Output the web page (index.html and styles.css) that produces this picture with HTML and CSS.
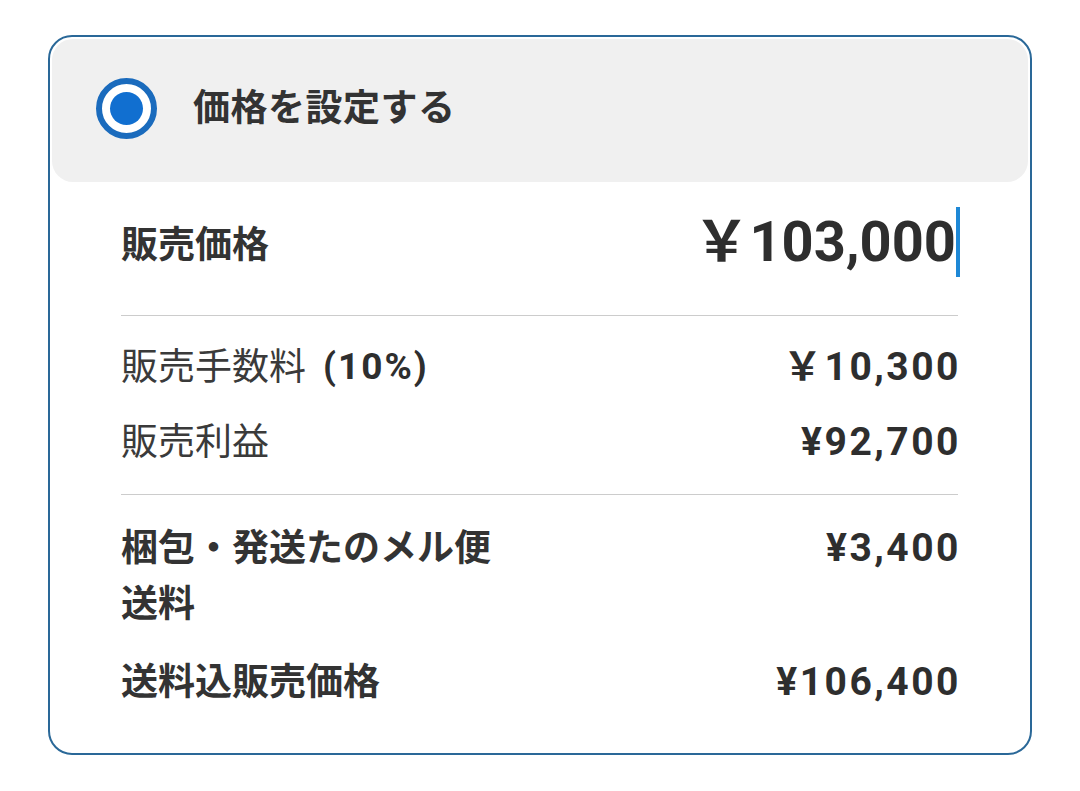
FILE: index.html
```html
<!DOCTYPE html>
<html lang="ja">
<head>
<meta charset="utf-8">
<link rel="stylesheet" href="styles.css">
</head>
<body>
<div class="card">
  <div class="header">
    <span class="radio"><span class="dot"></span></span>
    <span class="title">価格を設定する</span>
  </div>
  <div class="body">
    <div class="row main">
      <span class="label bold">販売価格</span>
      <span class="price-input"><span class="big">￥103,000</span><span class="cursor"></span></span>
    </div>
    <div class="divider"></div>
    <div class="group">
      <div class="row">
        <span class="label">販売手数料<b class="num">(10%)</b></span>
        <span class="amount">￥10,300</span>
      </div>
      <div class="row">
        <span class="label">販売利益</span>
        <span class="amount">¥92,700</span>
      </div>
    </div>
    <div class="divider"></div>
    <div class="group last">
      <div class="row">
        <span class="label bold narrow">梱包・発送たのメル便送料</span>
        <span class="amount">¥3,400</span>
      </div>
      <div class="row">
        <span class="label bold">送料込販売価格</span>
        <span class="amount">¥106,400</span>
      </div>
    </div>
  </div>
</div>
</body>
</html>
```

FILE: styles.css
```css
* { box-sizing: border-box; }
html, body { margin: 0; padding: 0; background: #ffffff; }
body {
  font-family: "Noto Sans CJK JP", "Noto Sans", sans-serif;
  color: #333333;
}
.card {
  margin: 35px 0 0 48px;
  width: 984px;
  height: 720px;
  border: 2px solid #2a6898;
  border-radius: 24px;
  padding: 2px;
}
.header {
  height: 143px;
  background: #f0f0f0;
  border-radius: 21px;
  display: flex;
  align-items: center;
  padding-left: 44px;
  padding-bottom: 5px;
}
.radio {
  width: 61px;
  height: 61px;
  border: 6px solid #1a6bbd;
  border-radius: 50%;
  display: flex;
  align-items: center;
  justify-content: center;
  background: #ffffff;
}
.dot {
  width: 33px;
  height: 33px;
  border-radius: 50%;
  background: #116fd0;
}
.title {
  margin-left: 36px;
  font-size: 37px;
  line-height: 1;
  margin-bottom: 5px;
  font-weight: 700;
  letter-spacing: 0.5px;
  color: #333333;
}
.body {
  padding: 0 70px 0 69px;
}
.row {
  display: flex;
  justify-content: space-between;
  align-items: flex-start;
  line-height: 56px;
}
.row.main {
  align-items: center;
  padding-top: 25px;
  padding-bottom: 38px;
}
.label {
  display: block;
  font-size: 37px;
  line-height: 56px;
  font-weight: 400;
  color: #3a3a3a;
  position: relative;
  top: -3px;
}
.row.main .label { top: 0; }
.label.bold { font-weight: 700; color: #333333; }
.label.narrow { width: 392px; }
.num {
  font-family: Roboto, sans-serif;
  font-weight: 700;
  font-size: 37px;
  line-height: 1;
  vertical-align: 1px;
  letter-spacing: 2px;
  margin-left: 17px;
  color: #2e2e2e;
}
.amount {
  display: block;
  font-family: Roboto, "Noto Sans CJK JP", sans-serif;
  font-weight: 700;
  font-size: 39px;
  line-height: 56px;
  letter-spacing: 2.5px;
  color: #2e2e2e;
  margin-right: -3px;
}
.price-input {
  display: flex;
  align-items: center;
  height: 70px;
  margin-right: -2px;
}
.big {
  font-family: Roboto, "Noto Sans CJK JP", sans-serif;
  font-weight: 700;
  font-size: 56px;
  letter-spacing: 0;
  color: #2e2e2e;
}
.cursor {
  width: 4px;
  height: 70px;
  background: #1e88d6;
}
.divider {
  height: 1px;
  background: #cccccc;
}
.group {
  display: flex;
  flex-direction: column;
  gap: 19px;
  padding-top: 23px;
  padding-bottom: 24px;
}
.group.last {
  padding-top: 25px;
  gap: 22px;
}
```
